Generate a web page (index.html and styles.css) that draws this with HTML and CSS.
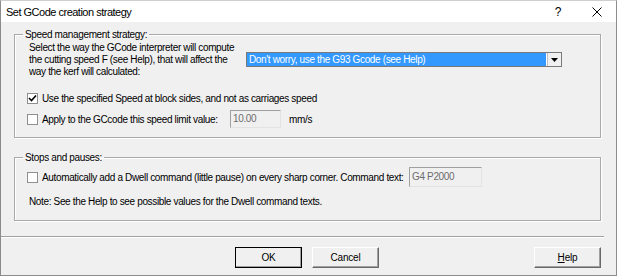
FILE: index.html
```html
<!DOCTYPE html>
<html lang="en">
<head>
    <meta charset="UTF-8">
    <title>Set GCode creation strategy</title>
    <link rel="stylesheet" href="styles.css">
</head>
<body>
    <div class="window">
        <div class="titlebar">
            <span class="title">Set GCode creation strategy</span>
            <span class="title-help">?</span>
            <span class="title-close">
                <svg width="10" height="10" viewBox="0 0 10 10"><path d="M0.5 0.5 L9.5 9.5 M9.5 0.5 L0.5 9.5" stroke="#000" stroke-width="1" fill="none"/></svg>
            </span>
        </div>
        <div class="client">
            <fieldset class="group speed-group">
                <legend>Speed management strategy:</legend>
                <div class="strategy">
                    <p class="desc">Select the way the GCode interpreter will compute<br>the cutting speed F (see Help), that will affect the<br>way the kerf will calculated:</p>
                    <div class="combo">
                        <span class="combo-value">Don't worry, use the G93 Gcode (see Help)</span>
                        <span class="combo-btn">
                            <svg width="7" height="4" viewBox="0 0 7 4"><path d="M0 0 H7 L3.5 4 Z" fill="#000"/></svg>
                        </span>
                    </div>
                </div>
                <div class="check-row first-check">
                    <span class="check">
                        <svg width="9" height="9" viewBox="0 0 9 9"><path d="M1 4 L3.5 6.5 L8 1.5" stroke="#000" stroke-width="1.6" fill="none"/></svg>
                    </span>
                    <span class="check-label">Use the specified Speed at block sides, and not as carriages speed</span>
                </div>
                <div class="check-row second-check">
                    <span class="check"></span>
                    <span class="check-label limit-label">Apply to the GCcode this speed limit value:</span>
                    <span class="field speed-field">10.00</span>
                    <span class="unit">mm/s</span>
                </div>
            </fieldset>

            <fieldset class="group stops-group">
                <legend>Stops and pauses:</legend>
                <div class="check-row dwell-check">
                    <span class="check"></span>
                    <span class="check-label dwell-label">Automatically add a Dwell command (little pause) on every sharp corner. Command text:</span>
                    <span class="field dwell-field">G4 P2000</span>
                </div>
                <p class="note">Note: See the Help to see possible values for the Dwell command texts.</p>
            </fieldset>

            <div class="separator"></div>

            <div class="buttons">
                <button class="btn default">OK</button>
                <button class="btn">Cancel</button>
                <button class="btn help-btn"><u>H</u>elp</button>
            </div>
        </div>
    </div>
</body>
</html>
```

FILE: styles.css
```css
body {
    margin: 0;
    font-family: "Liberation Sans", Arial, sans-serif;
    font-size: 10px;
    letter-spacing: -0.35px;
    color: #000;
    background: #fff;
}
.window {
    width: 615px;
    height: 274px;
    border: 1px solid #8c8c8c;
    border-top-color: #cfcfcf;
    background: #f0f0f0;
}
.titlebar {
    height: 21px;
    background: #fff;
    display: flex;
    align-items: center;
    padding-left: 5px;
}
.title {
    font-size: 11px;
    letter-spacing: -0.5px;
    flex: 1;
}
.title-help {
    font-size: 12px;
    width: 20px;
    margin-right: 24px;
    text-align: center;
}
.title-close {
    width: 10px;
    margin-right: 14px;
    display: flex;
}
.client {
    padding: 6px 15px 0 13px;
}
.group {
    margin: 0;
    padding: 0 0 0 8px;
    border: 1px solid #a9a9a9;
    box-shadow: inset 1px 1px #fff, 1px 1px #fff;
}
.group legend {
    padding: 0 2px;
    line-height: 13px;
}
.strategy {
    display: flex;
    height: 38px;
    padding-left: 6px;
}
.desc {
    margin: 1px 0 0;
    width: 217px;
    flex: none;
    line-height: 12px;
}
.combo {
    margin-top: 11px;
    width: 314px;
    height: 13px;
    border: 1px solid #7a7a7a;
    background: #fff;
    display: flex;
}
.combo-value {
    flex: 1;
    background: #3399ff;
    color: #fff;
    line-height: 13px;
    padding-left: 2px;
    margin-right: 1px;
}
.combo-btn {
    width: 13px;
    background: #f0f0f0;
    border-left: 1px solid #c0c0c0;
    display: flex;
    align-items: center;
    justify-content: center;
}
.check-row {
    display: flex;
    align-items: center;
    height: 20px;
    padding-left: 4px;
}
.first-check {
    margin-top: 9px;
}
.second-check {
    margin-top: 1px;
    margin-bottom: 8px;
}
.check {
    width: 11px;
    height: 11px;
    flex: none;
    box-sizing: border-box;
    border: 1px solid #8f8f8f;
    background: #fff;
    display: flex;
    align-items: center;
    justify-content: center;
    margin-right: 4px;
}
.limit-label {
    width: 188px;
}
.field {
    box-sizing: border-box;
    height: 18px;
    border: 1px solid #a0a0a0;
    border-right-color: #e3e3e3;
    border-bottom-color: #e3e3e3;
    color: #6d6d6d;
    line-height: 16px;
    padding-left: 2px;
    background: #f0f0f0;
}
.speed-field {
    width: 51px;
}
.unit {
    margin-left: 8px;
}
.stops-group {
    margin-top: 13px;
    padding-bottom: 12px;
}
.dwell-check {
    margin-top: 3px;
}
.dwell-label {
    width: 367px;
}
.dwell-field {
    width: 73px;
    height: 20px;
    line-height: 18px;
}
.note {
    margin: 8px 0 0 6px;
    line-height: 13px;
}
.separator {
    margin-top: 15px;
    margin-left: -13px;
    margin-right: -3px;
    border-top: 1px solid #a0a0a0;
    border-bottom: 1px solid #fff;
}
.buttons {
    display: flex;
    margin-top: 9px;
    padding-left: 221px;
}
.btn {
    font-family: "Liberation Sans", Arial, sans-serif;
    font-size: 10px;
    letter-spacing: -0.2px;
    width: 67px;
    height: 21px;
    padding: 0;
    background: #f0f0f0;
    border: 1px solid;
    border-color: #fff #696969 #696969 #fff;
    box-shadow: inset -1px -1px #a0a0a0;
    margin-right: 10px;
}
.default {
    outline: 1px solid #000;
    outline-offset: -1px;
}
.help-btn {
    margin-left: auto;
    margin-right: 0;
}
```
